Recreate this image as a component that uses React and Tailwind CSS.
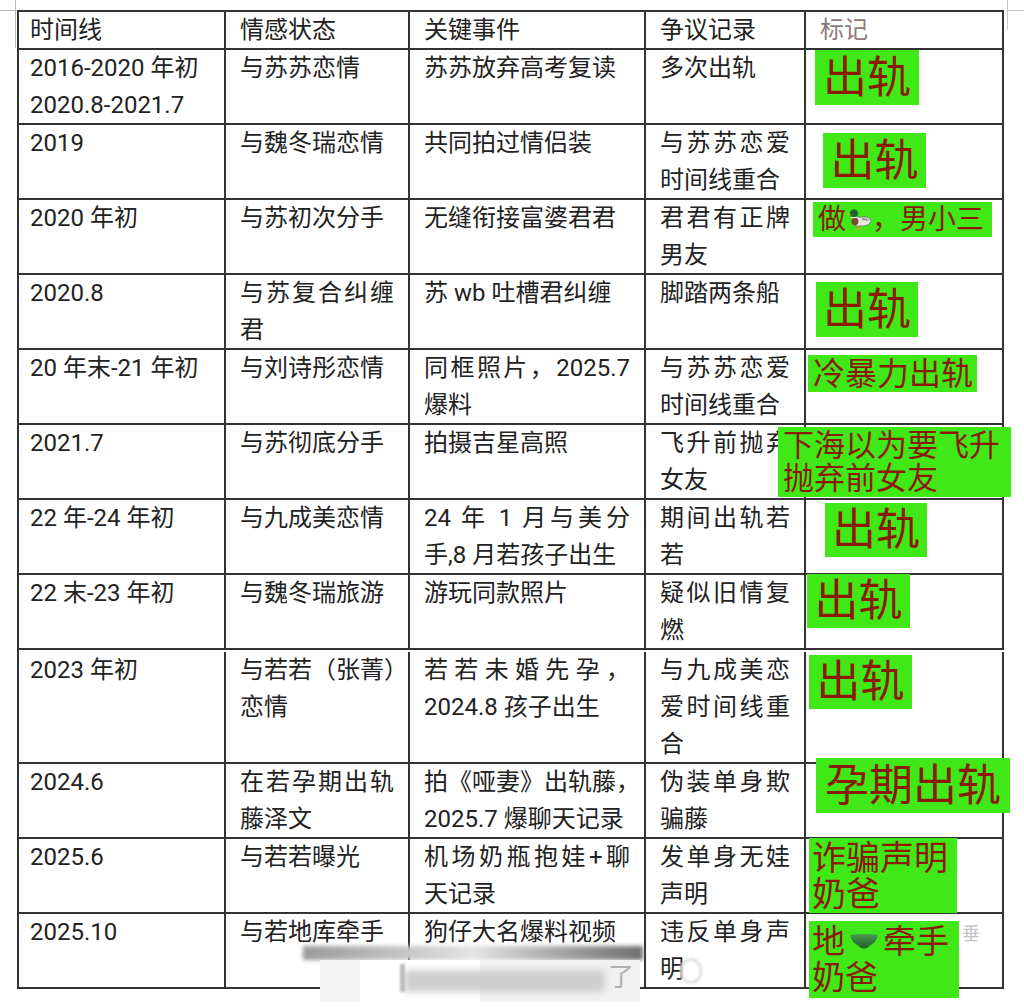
import React from "react";

const COLS = [
  "w-[207px] pl-[11px] pr-[12px]",
  "w-[184px] px-[14px]",
  "w-[236px] px-[14px]",
  "w-[160px] px-[14px]",
  "w-[198px] px-[14px]",
];

const rows = [
  { h: "h-[75px]", cells: [["2016-2020 年初", "2020.8-2021.7"], ["与苏苏恋情"], ["苏苏放弃高考复读"], ["多次出轨"]] },
  { h: "h-[75px]", cells: [["2019"], ["与魏冬瑞恋情"], ["共同拍过情侣装"], ["与苏苏恋爱", "时间线重合"]] },
  { h: "h-[75px]", cells: [["2020 年初"], ["与苏初次分手"], ["无缝衔接富婆君君"], ["君君有正牌", "男友"]] },
  { h: "h-[75px]", cells: [["2020.8"], ["与苏复合纠缠", "君"], ["苏 wb 吐槽君纠缠"], ["脚踏两条船"]] },
  { h: "h-[75px]", cells: [["20 年末-21 年初"], ["与刘诗彤恋情"], ["同框照片，2025.7", "爆料"], ["与苏苏恋爱", "时间线重合"]] },
  { h: "h-[75px]", cells: [["2021.7"], ["与苏彻底分手"], ["拍摄吉星高照"], ["飞升前抛弃", "女友"]] },
  { h: "h-[75px]", cells: [["22 年-24 年初"], ["与九成美恋情"], ["24 年 1 月与美分", "手,8 月若孩子出生"], ["期间出轨若", "若"]] },
  { h: "h-[75px]", cells: [["22 末-23 年初"], ["与魏冬瑞旅游"], ["游玩同款照片"], ["疑似旧情复", "燃"]] },
  { h: "h-[114px] pt-[2px]", cells: [["2023 年初"], ["与若若（张菁）", "恋情"], ["若若未婚先孕，", "2024.8 孩子出生"], ["与九成美恋", "爱时间线重", "合"]] },
  { h: "h-[75px]", cells: [["2024.6"], ["在若孕期出轨", "藤泽文"], ["拍《哑妻》出轨藤，", "2025.7 爆聊天记录"], ["伪装单身欺", "骗藤"]] },
  { h: "h-[75px]", cells: [["2025.6"], ["与若若曝光"], ["机场奶瓶抱娃+聊", "天记录"], ["发单身无娃", "声明"]] },
  { h: "h-[75px]", cells: [["2025.10"], ["与若地库牵手"], ["狗仔大名爆料视频"], ["违反单身声", "明"]] },
];

function Duck() {
  return (
    <svg width="26" height="26" viewBox="0 0 26 26" className="inline-block align-[-3px]">
      <path d="M6 16 Q6 10 12 11 L21 11 Q25 12 25 15 Q24 19 18 20 L11 20 Q7 20 6 16 Z" fill="#e9e6e0" stroke="#6b6b6b" strokeWidth="0.8" />
      <path d="M16 12 Q21 12 24 14 Q21 15 16 14 Z" fill="#9a9a9a" />
      <ellipse cx="9" cy="15.5" rx="3.4" ry="3.8" fill="#7a4b2e" />
      <circle cx="8" cy="7.5" r="4.2" fill="#1d6b33" />
      <path d="M5 11.3 Q8 12.3 11 11.2" stroke="#ffffff" strokeWidth="1" fill="none" />
      <path d="M4.2 7.2 L0.8 8.6 L4.2 9.6 Z" fill="#e2b428" />
      <circle cx="8.6" cy="6.6" r="0.7" fill="#111" />
      <path d="M12 20 L11 24 M15 20 L15 24" stroke="#e0902a" strokeWidth="1.2" />
    </svg>
  );
}

function Briefs() {
  return (
    <svg width="30" height="18" viewBox="0 0 30 18" className="inline-block mx-[4px] align-[2px]">
      <defs>
        <linearGradient id="bg" x1="0" y1="0" x2="0" y2="1">
          <stop offset="0" stopColor="#4a9a52" />
          <stop offset="1" stopColor="#1f5f2a" />
        </linearGradient>
      </defs>
      <path d="M1 2 Q15 0 29 2 Q28 9 19 14 Q15 17 11 14 Q2 9 1 2 Z" fill="url(#bg)" />
    </svg>
  );
}

const stickers = [
  { cls: "left-[815px] top-[50px] w-[104px] h-[55px] text-[44px] justify-center", lines: ["出轨"] },
  { cls: "left-[823px] top-[133px] w-[103px] h-[55px] text-[44px] justify-center", lines: ["出轨"] },
  { cls: "left-[813px] top-[202px] w-[179px] h-[35px] text-[28px] pl-[5px]", lines: [<>做<Duck />，男小三</>] },
  { cls: "left-[816px] top-[282px] w-[102px] h-[55px] text-[44px] justify-center", lines: ["出轨"] },
  { cls: "left-[808px] top-[355px] w-[169px] h-[37px] text-[32px] pl-[5px]", lines: ["冷暴力出轨"] },
  { cls: "left-[778px] top-[427px] w-[233px] h-[70px] text-[31px] pl-[5px] leading-[33px]", lines: ["下海以为要飞升", "抛弃前女友"] },
  { cls: "left-[825px] top-[503px] w-[102px] h-[54px] text-[44px] justify-center", lines: ["出轨"] },
  { cls: "left-[807px] top-[574px] w-[103px] h-[54px] text-[44px] justify-center", lines: ["出轨"] },
  { cls: "left-[809px] top-[655px] w-[103px] h-[54px] text-[44px] justify-center", lines: ["出轨"] },
  { cls: "left-[816px] top-[758px] w-[194px] h-[55px] text-[44px] justify-center", lines: ["孕期出轨"] },
  { cls: "left-[809px] top-[838px] w-[148px] h-[75px] text-[34px] pl-[3px] leading-[36px]", lines: ["诈骗声明", "奶爸"] },
  { cls: "left-[809px] top-[921px] w-[150px] h-[77px] text-[33px] pl-[3px] leading-[36px]", lines: [<>地<Briefs />牵手</>, "奶爸"] },
];

export default function App() {
  return (
    <div
      className="relative w-[1024px] h-[1008px] overflow-hidden bg-white text-[#222]"
      style={{ fontFamily: 'Roboto, "Noto Sans CJK SC", "Noto Sans", sans-serif' }}
    >
      {/* page marks */}
      <div className="absolute left-[15px] top-0 w-px h-[48px] bg-[#b8b8b8]" />
      <div className="absolute left-0 top-[10px] w-[15px] h-px bg-[#b8b8b8]" />
      <div className="absolute left-[1007px] top-0 w-px h-[30px] bg-[#c8c8c8]" />
      <div className="absolute left-[1006px] top-[10px] w-[18px] h-px bg-[#c8c8c8]" />

      <div className="ml-[17px] mt-[10px] w-[987px] border-l-2 border-t-2 border-[#333] text-[24px] leading-[37px]">
        <div className="flex h-[38px] border-b-2 border-[#333]">
          {["时间线", "情感状态", "关键事件", "争议记录", "标记"].map((t, i) => (
            <div
              key={t}
              className={`${COLS[i]} shrink-0 border-r-2 border-[#333] whitespace-nowrap ${i === 4 ? "text-[#8d7b7b]" : ""}`}
            >
              {t}
            </div>
          ))}
        </div>
        {rows.map((row, r) => (
          <div key={r} className={`flex border-b-2 border-[#333] ${row.h}`}>
            {[...row.cells, []].map((lines, i) => (
              <div key={i} className={`${COLS[i]} shrink-0 border-r-2 border-[#333]`}>
                {lines.map((t, k) => (
                  <div
                    key={k}
                    className={
                      i > 0 && k < lines.length - 1
                        ? "whitespace-nowrap text-justify [text-align-last:justify]"
                        : "whitespace-nowrap"
                    }
                  >
                    {t}
                  </div>
                ))}
              </div>
            ))}
          </div>
        ))}
      </div>

      {/* green stickers pasted over the last column */}
      {stickers.map((s, i) => (
        <div
          key={i}
          className={`absolute flex flex-col justify-center bg-[#3fe816] text-[#8a1a04] whitespace-nowrap ${s.cls}`}
        >
          {s.lines.map((l, k) => (
            <div key={k} className={s.cls.includes("justify-center") ? "text-center leading-none" : ""}>
              {l}
            </div>
          ))}
        </div>
      ))}

      <div className="absolute left-[962px] top-[924px] text-[18px] leading-[20px] text-[#c4c4c4]">垂</div>

      {/* blurred watermark bar */}
      <div className="absolute left-[303px] top-[946px] w-[340px] h-[56px]">
        <div className="h-[14px] bg-gradient-to-r from-[#9a9a9a] via-[#e4e4e4] to-[#6f6f6f] blur-[2px]" />
        <div className="relative flex h-[42px]">
          <div className="w-[17px]" />
          <div className="w-[40px] bg-[#f4f4f4]" />
          <div className="w-[120px] bg-white" />
          <div className="w-[160px] bg-[#f1f1f1]" />
          <div className="absolute left-[102px] top-[10px] w-[200px] h-[22px] bg-[#cfcfcf] blur-[3px]" />
          <div className="absolute left-[97px] top-[4px] w-[5px] h-[28px] bg-[#bdbdbd] blur-[1px]" />
          <div className="absolute left-[305px] top-[2px] text-[26px] leading-[30px] text-[#b0b0b0]">了</div>
        </div>
      </div>
      <div className="absolute left-[680px] top-[958px] w-[22px] h-[26px] rounded-full border-[3px] border-[#e2e2e2] blur-[1px]" />
    </div>
  );
}
